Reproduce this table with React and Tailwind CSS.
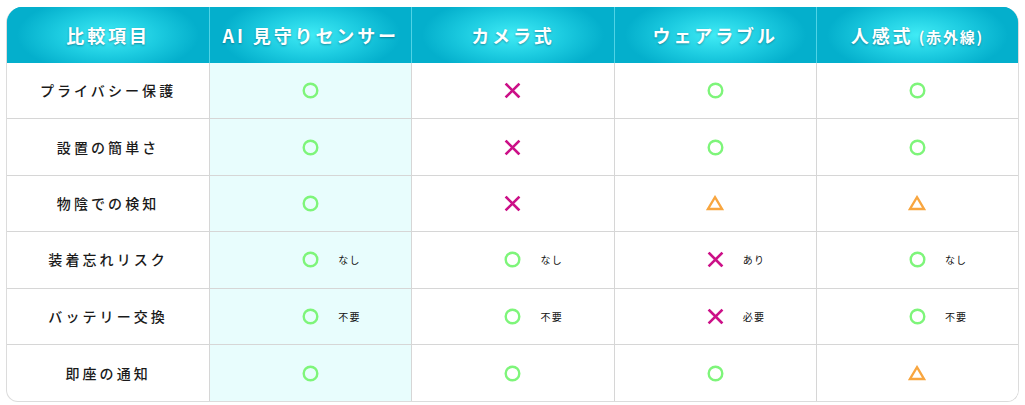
const columns = ["比較項目", "AI 見守りセンサー", "カメラ式", "ウェアラブル", "人感式"];

const rows = [
  { label: "プライバシー保護", values: [["o"], ["x"], ["o"], ["o"]] },
  { label: "設置の簡単さ", values: [["o"], ["x"], ["o"], ["o"]] },
  { label: "物陰での検知", values: [["o"], ["x"], ["t"], ["t"]] },
  { label: "装着忘れリスク", values: [["o", "なし"], ["o", "なし"], ["x", "あり"], ["o", "なし"]] },
  { label: "バッテリー交換", values: [["o", "不要"], ["o", "不要"], ["x", "必要"], ["o", "不要"]] },
  { label: "即座の通知", values: [["o"], ["o"], ["o"], ["t"]] },
];

function Mark({ type }) {
  if (type === "o") {
    return (
      <svg width="17" height="17" viewBox="0 0 17 17">
        <circle cx="8.5" cy="8.5" r="6.8" fill="none" stroke="#7ef57a" strokeWidth="2.4" />
      </svg>
    );
  }
  if (type === "x") {
    return (
      <svg width="17" height="17" viewBox="0 0 17 17">
        <path d="M2.5 2.5 L14.5 14.5 M14.5 2.5 L2.5 14.5" stroke="#cc1188" strokeWidth="2.6" strokeLinecap="square" />
      </svg>
    );
  }
  return (
    <svg width="18" height="16" viewBox="0 0 18 16">
      <path d="M9 2.2 L16 14 L2 14 Z" fill="none" stroke="#f8a640" strokeWidth="2.3" strokeLinejoin="miter" />
    </svg>
  );
}

function Cell({ value, highlight }) {
  const [type, note] = value;
  return (
    <div
      className={`grid grid-cols-[1fr_auto_1fr] items-center border-l border-[#d6d6d6] ${
        highlight ? "bg-[#e8fdfd]" : "bg-white"
      }`}
    >
      <div />
      <Mark type={type} />
      <div className="pl-[19px] text-[10px] tracking-[0.12em] text-[#111]">{note}</div>
    </div>
  );
}

export default function App() {
  return (
    <div
      className="w-[1025px] h-[405px] bg-white pt-[7px] px-[6px]"
      style={{ fontFamily: '"Noto Sans CJK JP", "Noto Sans", sans-serif' }}
    >
      <div className="w-[1013px] rounded-t-[16px] rounded-b-[12px] border border-[#dcdcdc] border-t-0 overflow-hidden">
        <div className="grid grid-cols-5 h-[56px] bg-[#03b0cd]">
          {columns.map((col, i) => (
            <div
              key={col}
              className={`flex items-center justify-center bg-[radial-gradient(ellipse_45%_70%_at_50%_50%,#40ebf5_0%,#1ccbe0_55%,#04afcc_100%)] ${
                i > 0 ? "border-l border-[#4fd3e6]" : ""
              }`}
            >
              <span className="text-white font-bold text-[18px] tracking-[0.16em] [text-shadow:0_1px_2px_rgba(0,60,80,0.45)]">
                {col}
                {i === 4 && <span className="text-[15px] tracking-[0.12em]"> (赤外線)</span>}
              </span>
            </div>
          ))}
        </div>
        {rows.map((row, r) => (
          <div
            key={row.label}
            className={`grid grid-cols-5 h-[56.4px] ${r < rows.length - 1 ? "border-b border-[#d6d6d6]" : ""}`}
          >
            <div className="flex items-center justify-center text-[14px] font-medium tracking-[0.22em] text-[#1a1a1a]">
              {row.label}
            </div>
            {row.values.map((v, c) => (
              <Cell key={c} value={v} highlight={c === 0} />
            ))}
          </div>
        ))}
      </div>
    </div>
  );
}
